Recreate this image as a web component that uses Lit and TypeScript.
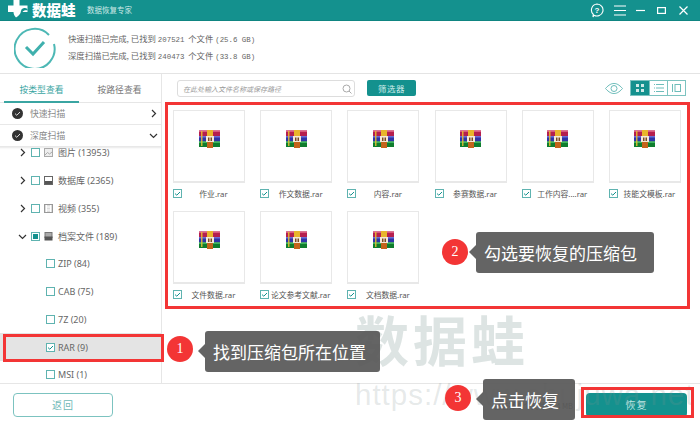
import { LitElement, html, css, svg } from "lit";
import { customElement } from "lit/decorators.js";

const rar = html`<svg class="rar" width="21" height="18" viewBox="0 0 21 18">
  <rect x="0" y="0.5" width="21" height="5.5" fill="#b51f4e"/><rect x="0" y="0.5" width="21" height="1.5" fill="#d95a7e"/>
  <rect x="0" y="6" width="21" height="5.5" fill="#2e33a8"/><rect x="0" y="6" width="21" height="1.5" fill="#6a6fd8"/>
  <rect x="0" y="11.5" width="21" height="5.5" fill="#0f7d2e"/><rect x="0" y="11.5" width="21" height="1.5" fill="#3fb45c"/>
  <rect x="2" y="1" width="1.5" height="15" fill="#e8c030" opacity=".85"/>
  <rect x="8" y="0" width="6" height="6" fill="#e8b52c"/>
  <rect x="8" y="6" width="6" height="12" fill="#c4641c"/>
  <rect x="7" y="6" width="8" height="6" fill="#f4e8d8"/>
  <rect x="9" y="7.5" width="1.5" height="3.5" fill="#7a4a20"/><rect x="11.5" y="7.5" width="1.5" height="3.5" fill="#7a4a20"/>
</svg>`;

const chev = (d: "r" | "d") => html`<svg class="chev" width="9" height="9" viewBox="0 0 9 9" fill="none" stroke="#333" stroke-width="1.2">
  ${d === "r" ? svg`<path d="M3 1l3.5 3.5L3 8"/>` : svg`<path d="M1 3l3.5 3.5L8 3"/>`}</svg>`;

const scanDot = html`<svg width="11" height="11" viewBox="0 0 11 11"><circle cx="5.5" cy="5.5" r="5.5" fill="#333"/><path d="M3 5.6l1.8 1.7L8 4" fill="none" stroke="#ddd" stroke-width="1"/></svg>`;

const boxCheck = html`<svg class="ck" width="9" height="9" viewBox="0 0 9 9"><rect x=".5" y=".5" width="8" height="8" fill="#fff" stroke="#5fb3b0"/><path d="M2 4.6l1.8 1.6L7 3" fill="none" stroke="#14918e" stroke-width="1"/></svg>`;
const boxEmpty = html`<svg class="ck" width="9" height="9" viewBox="0 0 9 9"><rect x=".5" y=".5" width="8" height="8" fill="#fff" stroke="#5fb3b0"/></svg>`;
const boxPart = html`<svg class="ck" width="9" height="9" viewBox="0 0 9 9"><rect x=".5" y=".5" width="8" height="8" fill="#fff" stroke="#5fb3b0"/><rect x="2" y="2" width="5" height="5" fill="#14918e"/></svg>`;

const icons = {
  pic: html`<svg width="9" height="9" viewBox="0 0 9 9"><rect x=".5" y=".5" width="8" height="8" fill="#eee" stroke="#aaa"/><path d="M1 7l2.500-2.500 2 1.500L8 4" fill="none" stroke="#aaa"/></svg>`,
  db: html`<svg width="9" height="9" viewBox="0 0 9 9"><rect x=".5" y=".5" width="8" height="8" fill="#fff" stroke="#666"/><rect x="1" y="5" width="7" height="3" fill="#555"/></svg>`,
  vid: html`<svg width="9" height="9" viewBox="0 0 9 9"><rect x=".5" y=".5" width="8" height="8" fill="#ddd" stroke="#999"/><path d="M2.500 1v7M6.500 1v7M3 3h3M3 6h3" stroke="#fff"/></svg>`,
  arc: html`<svg width="9" height="9" viewBox="0 0 9 9"><rect x="1" y=".5" width="7" height="5" fill="#aaa" stroke="#777"/><rect x=".5" y="4.500" width="8" height="4" fill="#555"/></svg>`,
};

const files = ["作业.rar", "作文数据.rar", "内容.rar", "参赛数据.rar", "工作内容....rar", "技能文模板.rar", "文件数据.rar", "论文参考文献.rar", "文档数据.rar"];

const scanLine = (name: string, count: string, size: string) =>
  html`<div>${name}已完成, 已找到 <span class="m">${count}</span>  个文件 <span class="m">(${size} GB)</span></div>`;

@customElement("app-root")
export class AppRoot extends LitElement {
  static styles = css`
    :host { display: block; width: 700px; height: 426px; position: relative; overflow: hidden; background: #fff;
      font-family: "Noto Sans", "Noto Sans CJK SC", sans-serif; color: #555; }
    * { box-sizing: border-box; }
    .page { display: flex; flex-direction: column; height: 426px; }
    .top { height: 21px; flex: none; background: #14918e; display: flex; align-items: center; padding: 0 12px 0 8px; color: #fff; border-bottom: 1px solid #0f8581; }
    .brand { font: 900 14.5px/20px "Noto Sans CJK SC", sans-serif; margin-left: 4px; width: 55px; white-space: nowrap; }
    .tag { font: 7.5px/20px "Noto Sans CJK SC", sans-serif; color: #cfe9e7; white-space: nowrap; }
    .win { margin-left: auto; display: flex; align-items: center; }
    .w1 { margin-right: 10px; } .w2 { margin-right: 10px; } .w3 { margin-right: 12px; } .w4 { margin-right: 13px; }
    .status { height: 53px; flex: none; border-bottom: 1px solid #e4e4e4; display: flex; align-items: center; padding-left: 14px; }
    .lines { margin-left: 12px; font: 8.4px/17px "Noto Sans CJK SC", sans-serif; color: #666; white-space: pre; }
    .lines .m { font: 7.4px "Liberation Mono", monospace; }
    .body { flex: 1; display: flex; min-height: 0; }
    .side { width: 162px; flex: none; border-right: 1px solid #e6e6e6; display: flex; flex-direction: column; overflow: hidden; }
    .tabs { height: 29px; flex: none; display: flex; border-bottom: 1px solid #e6e6e6; padding-left: 4px; font: 8.8px/32px "Noto Sans CJK SC", sans-serif; }
    .tab { width: 75px; text-align: center; color: #777; }
    .tab.on { color: #3aa5a2; border-bottom: 2px solid #3aa5a2; height: 29px; }
    .tab + .tab { margin-left: 3px; }
    .scan { height: 22px; flex: none; display: flex; align-items: center; padding: 0 3px 1px 12px; border-bottom: 1px solid #e8e8e8; font: 8.8px "Noto Sans CJK SC", sans-serif; color: #888; }
    .scan span { margin-left: 7px; flex: 1; }
    .tree { flex: 1; overflow: hidden; box-shadow: inset 0 3px 2px -2px #e8e8e8; }
    .treein { margin-top: -8px; }
    .row { height: 27.75px; display: flex; align-items: center; font-size: 9px; color: #666; white-space: nowrap; }
    .row.l1 { padding-left: 18px; }
    .row.l1 .ck { margin-left: 4px; }
    .row.l1 .ic { margin: 0 5px 0 4px; display: flex; }
    .row.l2 { padding-left: 46px; }
    .row.l2 .ck { margin-right: 3px; }
    .row.sel { background: #e4e4e4; }
    svg { flex: none; display: block; }
    .foot { height: 43px; flex: none; border-top: 1px solid #e6e6e6; display: flex; align-items: center; padding: 0 13px; }
    .back { width: 100px; height: 24px; margin-top: -1px; border: 1px solid #7cc3c0; border-radius: 4px; color: #6fb9b6; font: 10px/22px "Noto Sans CJK SC", sans-serif; text-align: center; letter-spacing: 1px; }
    .sum { margin-left: auto; font: 7.5px "Noto Sans CJK SC", sans-serif; color: #555; white-space: nowrap; }
    .rec { width: 101px; height: 24px; margin: -1px 0 0 13px; background: #14918e; border-radius: 4px; color: #bfe6e3; font: 10px/24px "Noto Sans CJK SC", sans-serif; text-align: center; letter-spacing: 1px; }
    .main { flex: 1; min-width: 0; display: flex; flex-direction: column; padding: 6px 14px 0 15px; }
    .tool { display: flex; align-items: flex-start; height: 22px; flex: none; }
    .search { width: 178px; height: 17px; border: 1px solid #ddd; border-radius: 3px; display: flex; align-items: center; justify-content: space-between; padding: 0 2px 0 5px; font: italic 7px "Noto Sans CJK SC", sans-serif; color: #999; }
    .filter { width: 49px; height: 16px; margin-left: 12px; background: #14918e; border-radius: 2px; color: #d3eeec; font: 8.5px/16px "Noto Sans CJK SC", sans-serif; text-align: center; letter-spacing: .5px; }
    .eye { margin: 3px 7px 0 auto; }
    .views { display: flex; border: 1px solid #7cc3c0; height: 16px; }
    .v { width: 18px; display: flex; align-items: center; justify-content: center; }
    .v + .v { border-left: 1px solid #7cc3c0; }
    .v.on { background: #14918e; }
    .grid { display: grid; grid-template-columns: repeat(6, 72px); column-gap: 15.2px; padding-top: 8px; margin-left: -4px; }
    .cell { height: 101px; }
    .thumb { width: 72px; height: 73px; border: 1px solid #e8e8e8; border-bottom-width: 2px; display: flex; align-items: center; justify-content: center; padding-bottom: 14px; }
    .cap { display: flex; align-items: center; margin-top: 4px; height: 12px; font: 7.8px "Noto Sans", "Noto Sans CJK SC", sans-serif; color: #555; white-space: nowrap; }
    .cap .n { flex: 1; text-align: center; }
    .wm { position: absolute; left: 355px; top: 304px; color: rgba(130,155,150,.27); pointer-events: none; white-space: nowrap; }
    .wm1 { font: 700 54px/70px "Noto Sans CJK SC", sans-serif; letter-spacing: 4px; }
    .wm2 { font: 29.5px/34px "Liberation Sans", sans-serif; letter-spacing: 1px; margin-top: 4px; color: rgba(130,145,145,.2); }
    .red { position: absolute; border: 3px solid #f33535; pointer-events: none; }
    .r1 { left: 165px; top: 102px; width: 525px; height: 207px; }
    .r2 { left: 3px; top: 334px; width: 161px; height: 28px; }
    .r3 { left: 581px; top: 387px; width: 113px; height: 31px; }
    .call { position: absolute; height: 41px; background: rgba(88,88,88,.93); border-radius: 3px; color: #fff; font: 17px/41px "Noto Sans CJK SC", sans-serif; padding-left: 8px; white-space: nowrap; }
    .call::before { content: ""; position: absolute; left: -7px; top: 13px; border: 7px solid transparent; border-left: 0; border-right-color: rgba(88,88,88,.93); }
    .num { position: absolute; width: 26px; height: 26px; border-radius: 50%; background: #f33535; color: #fff; font: 14px/26px "Liberation Serif", serif; text-align: center; }
    .n1 { left: 167px; top: 336px; } .n2 { left: 442px; top: 239px; } .n3 { left: 445px; top: 385px; }
    .c1 { left: 205px; top: 331px; width: 175px; } .c2 { left: 476px; top: 232px; width: 178px; } .c3 { left: 483px; top: 379px; width: 92px; }
  `;

  render() {
    return html`<div class="page">
      <div class="top">
        <svg width="20" height="20" viewBox="0 0 20 20"><path d="M5.500 0h6v5.500H19.500V12H13c-1 2.500-3 4.500-5 5.500-1.500-1.500-2.500-3.500-2.500-5.500H0V5.500h5.500z" fill="#fff"/><path d="M19.500 9c-2-1.500-4.500-1-6 .5l-1 3 2-.5c1-1.500 3-2 5-1.500z" fill="#14918e"/></svg>
        <span class="brand">数据蛙</span>
        <span class="tag">数据恢复专家</span>
        <div class="win">
          <svg class="w1" width="14" height="15" viewBox="0 0 14 15" fill="none" stroke="#fff" stroke-width="1.1"><path d="M7 1a6 6 0 1 1-3 11.200L3 14l.2-2.800A6 6 0 0 1 7 1z"/><text x="7" y="10" font-size="8" font-weight="700" text-anchor="middle" fill="#fff" stroke="none" font-family="Liberation Sans">?</text></svg>
          <svg class="w2" width="12" height="11" viewBox="0 0 12 11" stroke="#fff" stroke-width="1.200"><path d="M0 1h12M0 5.500h12M0 10h12"/></svg>
          <svg class="w3" width="9" height="9" viewBox="0 0 9 9" stroke="#fff" stroke-width="1.200"><path d="M0 4.500h9"/></svg>
          <svg class="w4" width="9" height="7" viewBox="0 0 9 7" fill="none" stroke="#fff" stroke-width="1.200"><rect x=".6" y=".6" width="7.800" height="5.800"/></svg>
          <svg width="9" height="9" viewBox="0 0 9 9" stroke="#fff" stroke-width="1.200"><path d="M.5.500l8 8M8.500.500l-8 8"/></svg>
        </div>
      </div>
      <div class="status">
        <svg width="42" height="42" viewBox="0 0 42 42" fill="none" stroke="#4db8b5" stroke-width="2"><path d="M35 9A20 20 0 1 0 40 18"/><path d="M12 21l7 7 11-12" stroke-width="3" stroke="#3fb0ad"/></svg>
        <div class="lines">${scanLine("快速扫描", "207521", "25.6")}${scanLine("深度扫描", "240473", "33.8")}</div>
      </div>
      <div class="body">
        <div class="side">
          <div class="tabs"><div class="tab on">按类型查看</div><div class="tab">按路径查看</div></div>
          <div class="scan">${scanDot}<span>快速扫描</span>${chev("r")}</div>
          <div class="scan">${scanDot}<span>深度扫描</span>${chev("d")}</div>
          <div class="tree"><div class="treein">
            <div class="row l1">${chev("r")}${boxEmpty}<span class="ic">${icons.pic}</span>图片 (13953)</div>
            <div class="row l1">${chev("r")}${boxEmpty}<span class="ic">${icons.db}</span>数据库 (2365)</div>
            <div class="row l1">${chev("r")}${boxEmpty}<span class="ic">${icons.vid}</span>视频 (355)</div>
            <div class="row l1">${chev("d")}${boxPart}<span class="ic">${icons.arc}</span>档案文件 (189)</div>
            <div class="row l2">${boxEmpty}ZIP (84)</div>
            <div class="row l2">${boxEmpty}CAB (75)</div>
            <div class="row l2">${boxEmpty}7Z (20)</div>
            <div class="row l2 sel">${boxCheck}RAR (9)</div>
            <div class="row l2">${boxEmpty}MSI (1)</div>
          </div></div>
        </div>
        <div class="main">
          <div class="tool">
            <div class="search"><span>在此处输入文件名称或保存路径</span>
              <svg width="10" height="10" viewBox="0 0 10 10" fill="none" stroke="#aaa"><circle cx="4.500" cy="4.500" r="3.500"/><path d="M7 7l2.500 2.500"/></svg></div>
            <div class="filter">筛选器</div>
            <svg class="eye" width="18" height="11" viewBox="0 0 18 11" fill="none" stroke="#6dbdba"><path d="M.5 5.500C4 1.500 6.500.5 9 .5s5 1 8.500 5c-3.500 4-6 5-8.500 5s-5-1-8.500-5z"/><circle cx="9" cy="5.500" r="3"/></svg>
            <div class="views">
              <div class="v on"><svg width="8" height="8" viewBox="0 0 8 8" fill="#cfe9e7"><rect width="3" height="3"/><rect x="5" width="3" height="3"/><rect y="5" width="3" height="3"/><rect x="5" y="5" width="3" height="3"/></svg></div>
              <div class="v"><svg width="10" height="8" viewBox="0 0 10 8" stroke="#6dbdba"><path d="M2 .5h8M2 4h8M2 7.500h8M0 .5h1M0 4h1M0 7.500h1"/></svg></div>
              <div class="v"><svg width="9" height="8" viewBox="0 0 9 8" fill="none" stroke="#6dbdba"><path d="M.5 0v8"/><rect x="3" y=".5" width="5.500" height="7"/></svg></div>
            </div>
          </div>
          <div class="grid">
            ${files.map((n) => html`<div class="cell"><div class="thumb">${rar}</div><div class="cap">${boxCheck}<span class="n">${n}</span></div></div>`)}
          </div>
        </div>
      </div>
      <div class="foot">
        <div class="back">返回</div>
        <div class="sum">已选择 9 个文件, 1.4 MB</div>
        <div class="rec">恢复</div>
      </div>
    </div>
    <div class="wm"><div class="wm1">数据蛙</div><div class="wm2">https://www.shujuwa.net</div></div>
    <div class="red r1"></div><div class="red r2"></div><div class="red r3"></div>
    <div class="num n1">1</div>
    <div class="call c1">找到压缩包所在位置</div>
    <div class="num n2">2</div>
    <div class="call c2">勾选要恢复的压缩包</div>
    <div class="num n3">3</div>
    <div class="call c3">点击恢复</div>`;
  }
}
